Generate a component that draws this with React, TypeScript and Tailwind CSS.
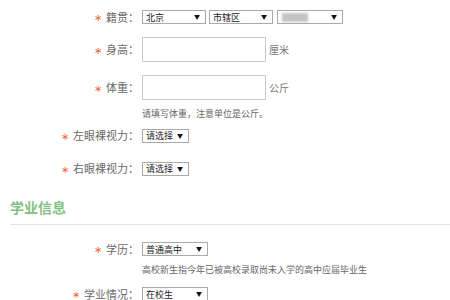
import React from "react";

const font = { fontFamily: '"Noto Sans CJK SC", "Noto Sans", sans-serif' };

function Sel({ w, text, blur = false }: { w: string; text: string; blur?: boolean }) {
  return (
    <div className={`relative h-[14px] ${w} border border-[#a9a9a9] bg-white flex items-center`}>
      {blur ? (
        <div className="ml-[4px] h-[9px] w-[26px] bg-[#c4c4c4] blur-[1px]" />
      ) : (
        <span className="pl-[3px] text-[9px] leading-none text-[#222]">{text}</span>
      )}
      <span className="absolute right-[5px] top-[3px] text-[6px] leading-none text-[#111]">▼</span>
    </div>
  );
}

function Label({ text }: { text: string }) {
  return (
    <div className="w-[140px] shrink-0 flex justify-end items-center pr-[1px] text-[11px] leading-none text-[#6a6a6a]">
      <span className="text-[#ec6a3a] mr-[4px] text-[10px] leading-none">∗</span>
      <span>{text}</span>
    </div>
  );
}

export default function App() {
  return (
    <div className="w-[450px] h-[300px] overflow-hidden bg-white relative" style={font}>
      <div className="flex flex-col">
        {/* 籍贯 */}
        <div className="flex items-center mt-[10px] h-[14px]">
          <Label text="籍贯：" />
          <div className="ml-[2px] flex items-center">
            <Sel w="w-[64px]" text="北京" />
            <div className="ml-[3px]"><Sel w="w-[64px]" text="市辖区" /></div>
            <div className="ml-[4px]"><Sel w="w-[66px]" text="" blur /></div>
          </div>
        </div>
        {/* 身高 */}
        <div className="flex items-center mt-[13px] h-[25px]">
          <Label text="身高：" />
          <div className="ml-[2px] h-[25px] w-[124px] border border-[#c9c9c9] bg-white" />
          <span className="ml-[3px] text-[10px] text-[#777]">厘米</span>
        </div>
        {/* 体重 */}
        <div className="flex items-center mt-[13px] h-[25px]">
          <Label text="体重：" />
          <div className="ml-[2px] h-[25px] w-[124px] border border-[#c9c9c9] bg-white" />
          <span className="ml-[3px] text-[10px] text-[#777]">公斤</span>
        </div>
        <div className="mt-[8px] h-[12px] pl-[142px] text-[9px] leading-[12px] text-[#666]">
          请填写体重，注意单位是公斤。
        </div>
        {/* 左眼 */}
        <div className="flex items-center mt-[8px] h-[15px]">
          <Label text="左眼裸视力：" />
          <div className="ml-[2px]"><Sel w="w-[47px]" text="请选择" /></div>
        </div>
        {/* 右眼 */}
        <div className="flex items-center mt-[18px] h-[15px]">
          <Label text="右眼裸视力：" />
          <div className="ml-[2px]"><Sel w="w-[47px]" text="请选择" /></div>
        </div>
        {/* heading */}
        <div className="mt-[21px] h-[20px] pl-[10px] text-[14px] leading-[20px] font-semibold text-[#84c084]">
          学业信息
        </div>
        <div className="mt-[7px] ml-[10px] h-px bg-[#e3e3e3]" />
        {/* 学历 */}
        <div className="flex items-center mt-[17px] h-[14px]">
          <Label text="学历：" />
          <div className="ml-[2px]"><Sel w="w-[66px]" text="普通高中" /></div>
        </div>
        <div className="mt-[8px] h-[12px] pl-[142px] text-[9px] leading-[12px] text-[#666]">
          高校新生指今年已被高校录取尚未入学的高中应届毕业生
        </div>
        {/* 学业情况 */}
        <div className="flex items-center mt-[11px] h-[14px]">
          <Label text="学业情况：" />
          <div className="ml-[2px]"><Sel w="w-[66px]" text="在校生" /></div>
        </div>
      </div>
    </div>
  );
}
